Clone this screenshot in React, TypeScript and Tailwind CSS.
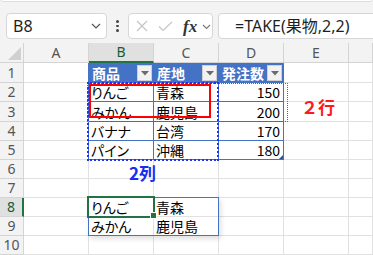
import React from "react";

type Cell = { text?: string; header?: boolean; num?: boolean };

const data: Record<number, Record<number, Cell>> = {
  1: { 2: { text: "商品", header: true }, 3: { text: "産地", header: true }, 4: { text: "発注数", header: true } },
  2: { 2: { text: "りんご" }, 3: { text: "青森" }, 4: { text: "150", num: true } },
  3: { 2: { text: "みかん" }, 3: { text: "鹿児島" }, 4: { text: "200", num: true } },
  4: { 2: { text: "バナナ" }, 3: { text: "台湾" }, 4: { text: "170", num: true } },
  5: { 2: { text: "パイン" }, 3: { text: "沖縄" }, 4: { text: "180", num: true } },
  8: { 2: { text: "りんご" }, 3: { text: "青森" } },
  9: { 2: { text: "みかん" }, 3: { text: "鹿児島" } },
};

const cols = ["", "A", "B", "C", "D", "E", ""];

function FilterBtn() {
  return (
    <div className="w-[15px] h-[16px] mb-[1px] mr-[1px] self-end bg-[#f2f2f2] border border-[#d0d0d0] flex items-center justify-center">
      <svg width="8" height="5" viewBox="0 0 8 5">
        <polygon points="0,0 8,0 4,4.5" fill="#6b6b6b" />
      </svg>
    </div>
  );
}

function SheetCell({ r, c }: { r: number; c: number }) {
  const cell = data[r]?.[c];
  const inTable = r >= 1 && r <= 5 && c >= 2 && c <= 4;
  const leftOfTable = r >= 1 && r <= 5 && c === 1;
  let cls = "border-r border-b ";
  if (inTable) {
    cls += "border-[#4472c4] ";
  } else if (leftOfTable) {
    cls += "border-r-[#4472c4] border-b-[#e1e1e1] ";
  } else {
    cls += "border-[#e1e1e1] ";
  }
  if (cell?.header) {
    return (
      <div className={cls + "bg-[#4472c4] flex items-stretch justify-between pl-[3px]"}>
        <span className="text-white font-bold text-[14px] leading-none self-center font-['Noto_Sans_CJK_JP',sans-serif]">
          {cell.text}
        </span>
        <FilterBtn />
      </div>
    );
  }
  return (
    <div
      className={
        cls +
        "bg-white flex items-center text-[14px] leading-none text-black font-['Noto_Sans_CJK_JP',sans-serif] [font-feature-settings:'palt'] " +
        (cell?.num ? "justify-end pr-[3px]" : "pl-[2px]") +
        (r === 5 && c === 4 ? " relative" : "")
      }
    >
      {cell?.text}
      {r === 5 && c === 4 && (
        <svg className="absolute right-0 bottom-0" width="4" height="4" viewBox="0 0 4 4">
          <polygon points="4,0 4,4 0,4" fill="#2f5597" />
        </svg>
      )}
    </div>
  );
}

export default function App() {
  const rows = [1, 2, 3, 4, 5, 6, 7, 8, 9, 10];
  return (
    <div className="w-[373px] h-[255px] overflow-hidden bg-white font-['Noto_Sans',sans-serif]">
      {/* Formula bar */}
      <div className="h-[43px] bg-[#f3f3f3] relative">
        <div className="h-[2px] mx-[1px] bg-white border-b border-x border-[#dedede] rounded-b-[3px]" />
        <div className="flex items-center pt-[7px] pl-[6px] h-[41px] whitespace-nowrap">
          {/* Name box */}
          <div className="w-[101px] h-[26px] bg-white border border-[#d6d6d6] rounded-[4px] flex items-center justify-between pl-[6px] pr-[5px] shrink-0">
            <span className="text-[16px] text-[#1f1f1f] leading-none">B8</span>
            <svg width="10" height="6" viewBox="0 0 10 6">
              <polyline points="1,1 5,5 9,1" fill="none" stroke="#555" strokeWidth="1.2" />
            </svg>
          </div>
          {/* dots */}
          <div className="w-[21px] flex flex-col items-center gap-[2px] shrink-0">
            <div className="w-[2.5px] h-[2.5px] rounded-full bg-[#444]" />
            <div className="w-[2.5px] h-[2.5px] rounded-full bg-[#444]" />
            <div className="w-[2.5px] h-[2.5px] rounded-full bg-[#444]" />
          </div>
          {/* cancel/enter/fx */}
          <div className="w-[85px] h-[26px] bg-white border border-[#d6d6d6] rounded-[4px] flex items-center pl-[6px] shrink-0">
            <svg width="12" height="12" viewBox="0 0 12 12" className="ml-[1px]">
              <path d="M1 1 L11 11 M11 1 L1 11" stroke="#c4c4c4" strokeWidth="1.1" fill="none" />
            </svg>
            <svg width="15" height="11" viewBox="0 0 15 11" className="ml-[10px]">
              <polyline points="1,5.5 5,9.5 14,1" stroke="#c4c4c4" strokeWidth="1.1" fill="none" />
            </svg>
            <span className="ml-[10px] font-['Liberation_Serif',serif] italic font-bold text-[17px] leading-none text-[#333]">
              fx
            </span>
            <svg width="9" height="6" viewBox="0 0 9 6" className="ml-[5px] mt-[2px]">
              <polyline points="1,1 4.5,4.5 8,1" fill="none" stroke="#777" strokeWidth="1.1" />
            </svg>
          </div>
          {/* formula */}
          <div className="ml-[5px] w-[200px] h-[26px] bg-white border border-[#d6d6d6] rounded-[4px] flex items-center pl-[16px] shrink-0">
            <span className="text-[16px] leading-none text-[#1f1f1f] font-['Noto_Sans','Noto_Sans_CJK_JP',sans-serif]">
              =TAKE(果物,2,2)
            </span>
          </div>
        </div>
      </div>

      {/* Sheet */}
      <div className="relative">
        <div className="grid grid-cols-[24px_65px_65px_65px_65px_65px_1fr] grid-rows-[20px_20px_19px_20px_19px_19px_19px_19px_19px_19px_19px]">
          {cols.map((c, i) => {
            if (i === 0) {
              return (
                <div key="corner" className="bg-[#f3f3f3] border-r border-b border-[#d4d4d4] relative">
                  <div className="absolute left-[-1px] top-[-1px] w-[1px] h-[1px] bg-black" />
                  <svg className="absolute left-[8px] top-[4px]" width="14" height="14" viewBox="0 0 14 14">
                    <polygon points="13,0 13,13 0,13" fill="#d0d0d0" />
                  </svg>
                </div>
              );
            }
            const sel = i === 2;
            return (
              <div
                key={"h" + i}
                className={
                  "flex items-center justify-center text-[14px] leading-none border-r " +
                  (sel
                    ? "bg-[#e0e0e0] text-[#185c37] border-b-2 border-b-[#217346] border-r-[#d4d4d4]"
                    : "bg-[#f3f3f3] text-[#555] border-b border-[#d4d4d4]")
                }
              >
                {c}
              </div>
            );
          })}
          {rows.map((r) => (
            <React.Fragment key={r}>
              <div
                className={
                  "flex items-center justify-center text-[14px] leading-none border-b border-[#d4d4d4] " +
                  (r === 8
                    ? "bg-[#e0e0e0] text-[#185c37] border-r-2 border-r-[#217346]"
                    : "bg-[#f3f3f3] text-[#555] border-r")
                }
              >
                {r}
              </div>
              {[1, 2, 3, 4, 5, 6].map((c) => (
                <SheetCell key={c} r={r} c={c} />
              ))}
            </React.Fragment>
          ))}
        </div>

        {/* spill border for result */}
        <div className="absolute left-[88px] top-[154px] w-[131px] h-[39px] border border-[#4472c4] shadow-[2px_3px_5px_rgba(0,0,0,0.12)] pointer-events-none" />
        {/* active cell */}
        <div className="absolute left-[87px] top-[153px] w-[68px] h-[22px] border-2 border-[#217346] pointer-events-none" />
        <div className="absolute left-[150px] top-[169px] w-[7px] h-[7px] bg-[#217346] border border-white pointer-events-none" />

        {/* annotations */}
        <div className="absolute left-[87px] top-[40px] w-[201px] h-[39px] border border-dotted border-[#ff2020] pointer-events-none" />
        <div className="absolute left-[87px] top-[39px] w-[132px] h-[79px] border-2 border-dotted border-[#2233ee] pointer-events-none" />
        <div className="absolute left-[89px] top-[41px] w-[122px] h-[34px] border-2 border-[#ff0000] pointer-events-none" />

        <div className="absolute left-[301px] top-[55px] text-[17px] leading-none font-bold text-[#ff1a1a] font-['Noto_Sans_CJK_JP',sans-serif]">
          ２行
        </div>
        <div className="absolute left-[129px] top-[121px] text-[17px] leading-none font-bold text-[#1a2cf0] font-['Noto_Sans_CJK_JP',sans-serif]">
          2列
        </div>
      </div>
    </div>
  );
}
